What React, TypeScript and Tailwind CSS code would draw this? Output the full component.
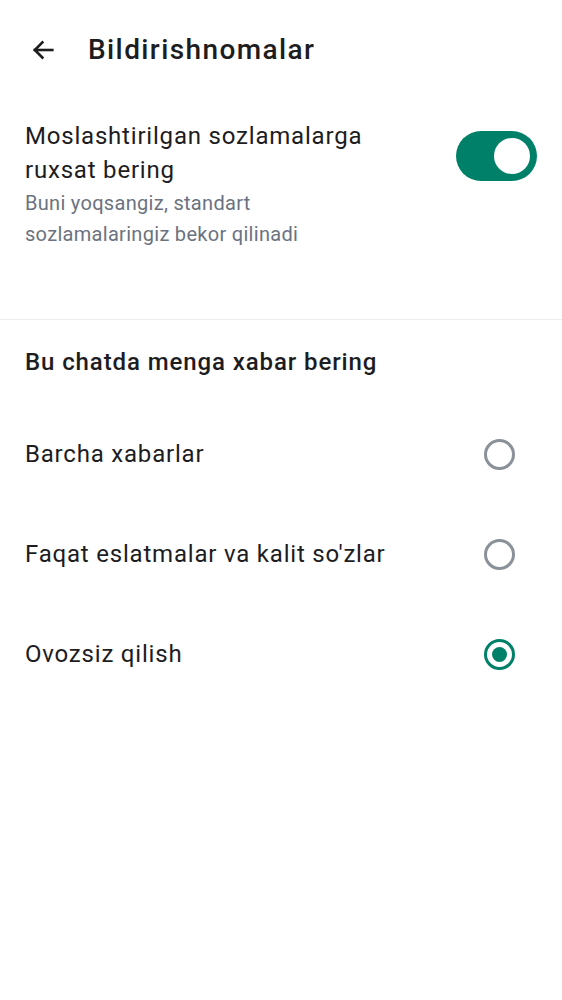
import { useState } from 'react';

const options = ['Barcha xabarlar', "Faqat eslatmalar va kalit so'zlar", 'Ovozsiz qilish'];

export default function App() {
  const [enabled, setEnabled] = useState(true);
  const [selected, setSelected] = useState(2);

  return (
    <div className="min-h-screen bg-white text-[#1d1c1f]" style={{ fontFamily: 'Roboto, "Noto Sans", sans-serif' }}>
      <div className="flex h-[100px] items-center">
        <button className="ml-[29px] mr-[31px] flex h-7 w-7 items-center justify-center">
          <svg width="28" height="28" viewBox="0 0 24 24" fill="none" stroke="#1d1c1f" strokeWidth="2.2" strokeLinecap="square">
            <path d="M20 12H5" />
            <path d="M11.5 5.5L5 12l6.5 6.5" />
          </svg>
        </button>
        <h1 className="text-[28px] font-medium leading-none tracking-[1.4px]">Bildirishnomalar</h1>
      </div>

      <div className="flex items-start justify-between px-[25px] pt-[19px] pb-[69px]">
        <div className="max-w-[355px]">
          <p className="text-[24px] leading-[34px] tracking-[0.8px]">Moslashtirilgan sozlamalarga ruxsat bering</p>
          <p className="mt-px text-[20px] leading-[31px] tracking-[0.3px] text-[#6b7280]">
            Buni yoqsangiz, standart sozlamalaringiz bekor qilinadi
          </p>
        </div>
        <button
          onClick={() => setEnabled(!enabled)}
          className={`mt-[12px] flex h-[50px] w-[81px] shrink-0 items-center rounded-full px-[7px] ${
            enabled ? 'justify-end bg-[#008069]' : 'justify-start bg-gray-300'
          }`}
        >
          <span className="h-9 w-9 rounded-full bg-white" />
        </button>
      </div>

      <div className="h-px bg-[#ececec]" />

      <h2 className="px-[25px] pt-[27px] text-[24px] font-medium leading-[30px] tracking-[0.9px]">
        Bu chatda menga xabar bering
      </h2>

      <div className="mt-[27px]">
        {options.map((label, i) => (
          <div
            key={label}
            onClick={() => setSelected(i)}
            className="flex h-[100px] cursor-pointer items-center justify-between pl-[25px] pr-[47px]"
          >
            <span className="text-[24px] tracking-[0.8px]">{label}</span>
            {selected === i ? (
              <span className="flex h-[31px] w-[31px] items-center justify-center rounded-full border-[3px] border-[#008069]">
                <span className="h-[15px] w-[15px] rounded-full bg-[#008069]" />
              </span>
            ) : (
              <span className="h-[31px] w-[31px] rounded-full border-[3px] border-[#8a9199]" />
            )}
          </div>
        ))}
      </div>
    </div>
  );
}
